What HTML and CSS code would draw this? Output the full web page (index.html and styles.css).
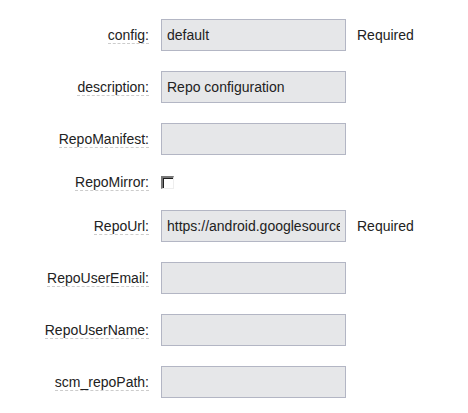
FILE: index.html
```html
<!DOCTYPE html>
<html lang="en">
<head>
    <meta charset="UTF-8">
    <meta name="viewport" content="width=device-width, initial-scale=1.0">
    <title>Repo SCM</title>
    <link rel="stylesheet" href="styles.css">
</head>
<body>
    <form class="props">
        <div class="name"><label for="config">config:</label></div>
        <input type="text" id="config" value="default">
        <span class="note">Required</span>

        <div class="name"><label for="description">description:</label></div>
        <input type="text" id="description" value="Repo configuration">
        <span></span>

        <div class="name"><label for="manifest">RepoManifest:</label></div>
        <input type="text" id="manifest">
        <span></span>

        <div class="name check-row"><label for="mirror">RepoMirror:</label></div>
        <div class="check-row"><span class="checkbox" id="mirror"></span></div>
        <span></span>

        <div class="name"><label for="url">RepoUrl:</label></div>
        <input type="text" id="url" value="https://android.googlesource.com/platform/manifest">
        <span class="note">Required</span>

        <div class="name"><label for="email">RepoUserEmail:</label></div>
        <input type="text" id="email">
        <span></span>

        <div class="name"><label for="username">RepoUserName:</label></div>
        <input type="text" id="username">
        <span></span>

        <div class="name"><label for="path">scm_repoPath:</label></div>
        <input type="text" id="path">
        <span></span>
    </form>
</body>
</html>
```

FILE: styles.css
```css
body {
    margin: 8px;
    font-family: "Liberation Sans", Arial, sans-serif;
    font-size: 14px;
    color: #222;
    background: #fff;
}
.props {
    display: grid;
    grid-template-columns: 141px 185px auto;
    column-gap: 12px;
    row-gap: 20px;
    align-items: center;
    padding-top: 11px;
}
.name {
    text-align: right;
    line-height: 16px;
}
.name label {
    display: inline-block;
    border-bottom: 1px dashed #ccc;
    color: #222;
}
.props input[type="text"] {
    box-sizing: border-box;
    width: 185px;
    height: 32px;
    margin: 0;
    padding: 0 5px;
    border: 1px solid #b3b6c4;
    border-radius: 0;
    background: #e6e7e9;
    font-family: inherit;
    font-size: 14px;
    color: #222;
    outline: none;
}
.check-row {
    height: 15px;
    display: flex;
    align-items: center;
}
.name.check-row {
    justify-content: flex-end;
}
/* old style sunken checkbox */
.checkbox {
    display: block;
    box-sizing: border-box;
    width: 13px;
    height: 13px;
    border-style: solid;
    border-width: 2px 1px 1px 2px;
    border-color: #777 #eee #eee #777;
    box-shadow: inset 1px 1px 0 #1e1e1e;
    background: #fff;
}
.note {
    margin-left: -1px;
    color: #222;
}
```
